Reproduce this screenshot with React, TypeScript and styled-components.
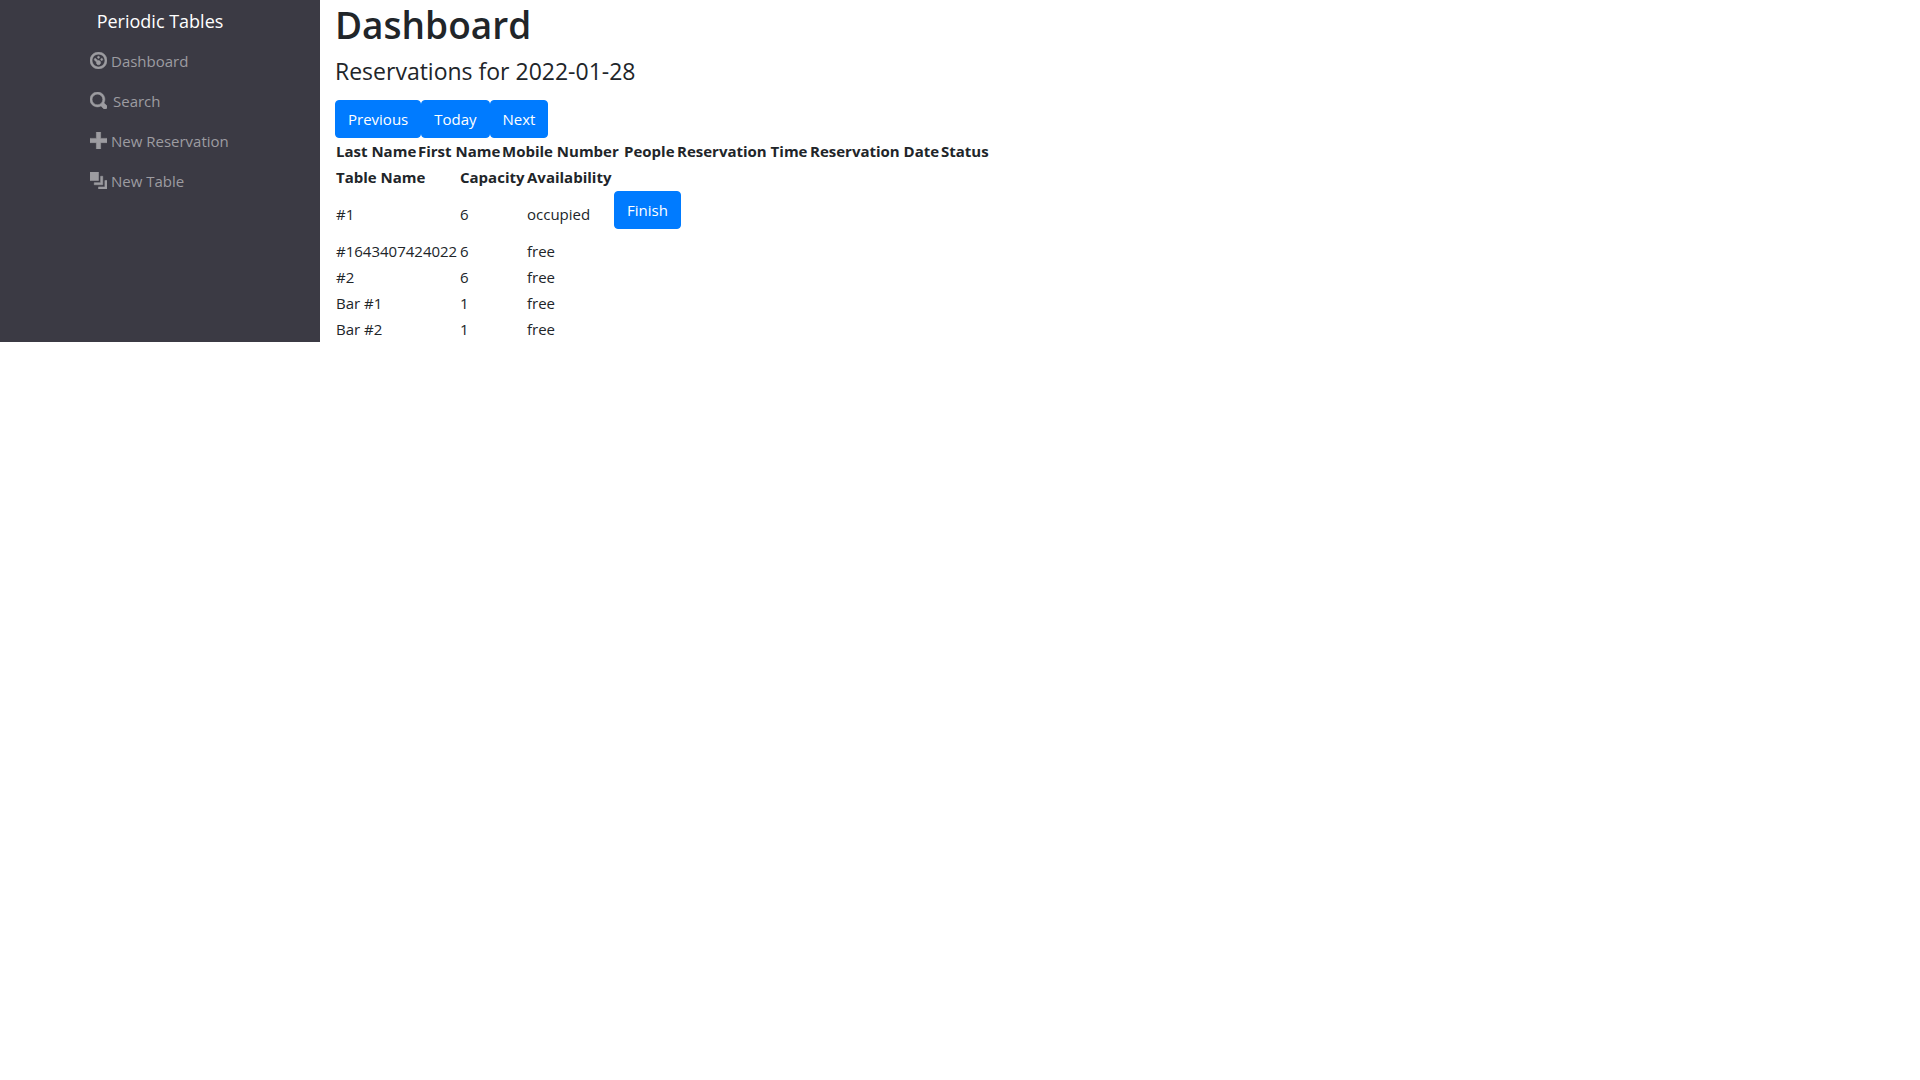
import React from "react";
import styled, { createGlobalStyle } from "styled-components";

const GlobalStyle = createGlobalStyle`
  *, *::before, *::after { box-sizing: border-box; }
  body {
    margin: 0;
    background: #fff;
    color: #212529;
    font-family: "Segoe UI", "Open Sans", "Noto Sans", sans-serif;
    font-size: 15px;
    line-height: 24px;
  }
`;

const Layout = styled.div`
  display: grid;
  grid-template-columns: 1fr 5fr;
`;

const Sidebar = styled.nav`
  display: flex;
  flex-direction: column;
  align-items: center;
  background: #3b3a44;
`;

const Brand = styled.a`
  padding: 6px 0 5px;
  color: #fff;
  font-size: 18px;
  line-height: 30px;
  text-decoration: none;
`;

const NavList = styled.ul`
  width: 140px;
  margin: 0;
  padding: 0;
  list-style: none;
`;

const NavLink = styled.a<{ $gap?: number }>`
  display: flex;
  align-items: center;
  gap: ${({ $gap = 4 }) => $gap}px;
  height: 40px;
  color: #9d9ca1;
  text-decoration: none;
  white-space: nowrap;
`;

const Icon = styled.svg`
  width: 17px;
  height: 17px;
  margin-bottom: 2px;
  fill: currentColor;
  stroke: currentColor;
  stroke-width: 0.25;
`;

const Main = styled.main`
  padding: 0 15px;
`;

const Title = styled.h1`
  margin: 0 0 6px;
  font-size: 37px;
  font-weight: 600;
  line-height: 50px;
`;

const Subtitle = styled.h4`
  margin: 0 0 14px;
  font-size: 23px;
  font-weight: 500;
  line-height: 30px;
`;

const ButtonRow = styled.div`
  display: flex;
`;

const Button = styled.button`
  height: 38px;
  padding: 0 12px;
  border: 1px solid #007bff;
  border-radius: 4px;
  background: #007bff;
  color: #fff;
  font: inherit;
  cursor: pointer;
`;

const Table = styled.table<{ $width: number }>`
  width: ${({ $width }) => $width}px;
  table-layout: fixed;
  border-collapse: collapse;
  white-space: nowrap;

  th, td {
    padding: 1px;
    text-align: left;
  }

  button {
    display: block;
    margin-bottom: 8px;
  }
`;

const Col = styled.col<{ $width: number }>`
  width: ${({ $width }) => $width}px;
`;

const links = [
  {
    label: "Dashboard",
    path: "M4 0c-2.2 0-4 1.8-4 4s1.8 4 4 4 4-1.8 4-4-1.8-4-4-4zm0 1c1.66 0 3 1.34 3 3s-1.34 3-3 3-3-1.34-3-3 1.34-3 3-3zm0 1c-.28 0-.5.22-.5.5s.22.5.5.5.5-.22.5-.5-.22-.5-.5-.5zm-1.66 1a.5.5 0 0 0-.19.84l.91.91c-.02.08-.06.16-.06.25 0 .55.45 1 1 1s1-.45 1-1-.45-1-1-1c-.09 0-.17.04-.25.06l-.91-.91a.5.5 0 0 0-.44-.16.5.5 0 0 0-.06 0zm3.16 0c-.28 0-.5.22-.5.5s.22.5.5.5.5-.22.5-.5-.22-.5-.5-.5z",
  },
  {
    label: "Search",
    gap: 6,
    path: "M3.5 0c-1.93 0-3.5 1.57-3.5 3.5s1.57 3.5 3.5 3.5c.59 0 1.17-.14 1.66-.41a1 1 0 0 0 .13.13l1 1a1.02 1.02 0 1 0 1.44-1.44l-1-1a1 1 0 0 0-.16-.13c.27-.49.44-1.06.44-1.66 0-1.93-1.55-3.5-3.5-3.5zm0 1c1.39 0 2.5 1.11 2.5 2.5 0 .66-.24 1.27-.66 1.72-.01.01-.02.02-.03.03a1 1 0 0 0-.13.13c-.44.4-1.04.63-1.69.63-1.39 0-2.5-1.11-2.5-2.5s1.11-2.5 2.5-2.5z",
  },
  { label: "New Reservation", path: "M3 0v3h-3v2h3v3h2v-3h3v-2h-3v-3h-2z" },
  {
    label: "New Table",
    path: "M0 0v4h4v-4h-4zm5 2v3h-3v1h4v-4h-1zm2 2v3h-3v1h4v-4h-1z",
  },
];

const reservationColumns = [
  { name: "Last Name", width: 82 },
  { name: "First Name", width: 84 },
  { name: "Mobile Number", width: 122 },
  { name: "People", width: 53 },
  { name: "Reservation Time", width: 133 },
  { name: "Reservation Date", width: 131 },
  { name: "Status", width: 48 },
];

const tableColumns = [
  { name: "Table Name", width: 124 },
  { name: "Capacity", width: 67 },
  { name: "Availability", width: 87 },
  { name: "", width: 68 },
];

const tables = [
  { name: "#1", capacity: 6, occupied: true },
  { name: "#1643407424022", capacity: 6, occupied: false },
  { name: "#2", capacity: 6, occupied: false },
  { name: "Bar #1", capacity: 1, occupied: false },
  { name: "Bar #2", capacity: 1, occupied: false },
];

type Column = { name: string; width: number };

function DataTable({ columns, children }: { columns: Column[]; children?: React.ReactNode }) {
  return (
    <Table $width={columns.reduce((sum, c) => sum + c.width, 0)}>
      <colgroup>
        {columns.map((c) => (
          <Col key={c.name} $width={c.width} />
        ))}
      </colgroup>
      <thead>
        <tr>
          {columns.map((c) => (c.name ? <th key={c.name} scope="col">{c.name}</th> : <td key="action" />))}
        </tr>
      </thead>
      <tbody>{children}</tbody>
    </Table>
  );
}

export default function App() {
  return (
    <>
      <GlobalStyle />
      <Layout>
        <Sidebar>
          <Brand href="#">Periodic Tables</Brand>
          <NavList>
            {links.map((link) => (
              <li key={link.label}>
                <NavLink href="#" $gap={link.gap}>
                  <Icon viewBox="0 0 8 8" aria-hidden="true">
                    <path d={link.path} />
                  </Icon>
                  {link.label}
                </NavLink>
              </li>
            ))}
          </NavList>
        </Sidebar>
        <Main>
          <Title>Dashboard</Title>
          <Subtitle>Reservations for 2022-01-28</Subtitle>
          <ButtonRow>
            <Button type="button">Previous</Button>
            <Button type="button">Today</Button>
            <Button type="button">Next</Button>
          </ButtonRow>
          <DataTable columns={reservationColumns} />
          <DataTable columns={tableColumns}>
            {tables.map((t) => (
              <tr key={t.name}>
                <td>{t.name}</td>
                <td>{t.capacity}</td>
                <td>{t.occupied ? "occupied" : "free"}</td>
                <td>{t.occupied && <Button type="button">Finish</Button>}</td>
              </tr>
            ))}
          </DataTable>
        </Main>
      </Layout>
    </>
  );
}
